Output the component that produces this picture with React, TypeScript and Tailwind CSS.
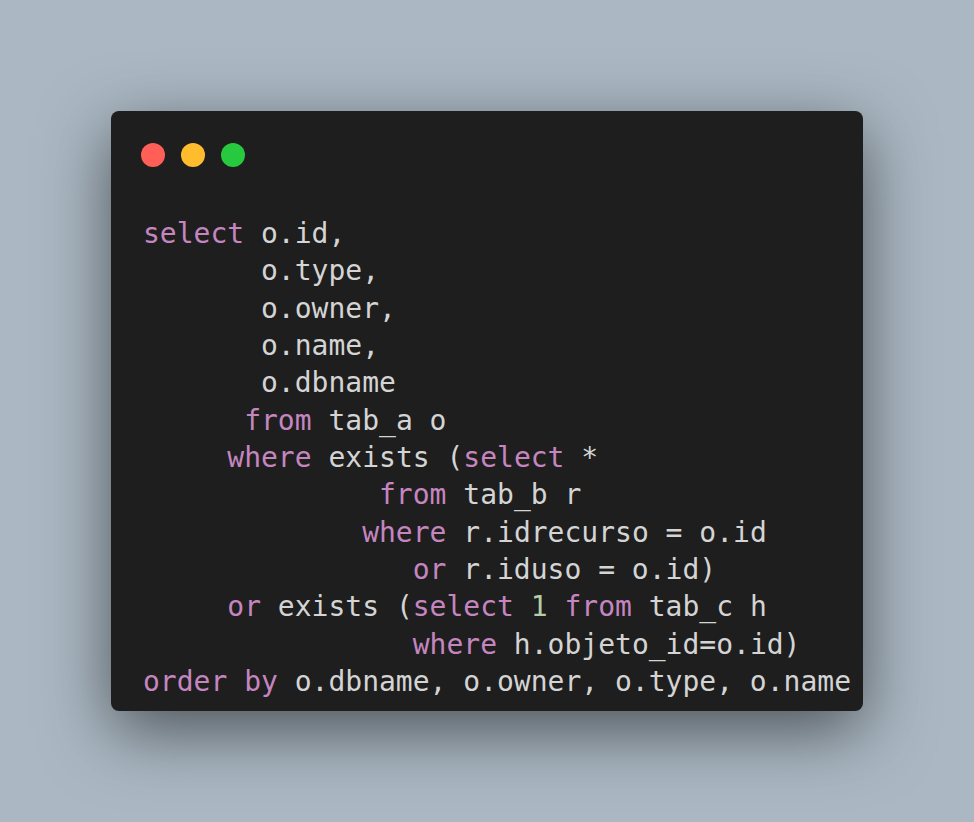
import React from "react";

type Tok = [string, "k" | "t" | "n"];

const LINES: Tok[][] = [
  [["select", "k"], [" o.id,", "t"]],
  [["       o.type,", "t"]],
  [["       o.owner,", "t"]],
  [["       o.name,", "t"]],
  [["       o.dbname", "t"]],
  [["      ", "t"], ["from", "k"], [" tab_a o", "t"]],
  [["     ", "t"], ["where", "k"], [" exists (", "t"], ["select", "k"], [" *", "t"]],
  [["              ", "t"], ["from", "k"], [" tab_b r", "t"]],
  [["             ", "t"], ["where", "k"], [" r.idrecurso = o.id", "t"]],
  [["                ", "t"], ["or", "k"], [" r.iduso = o.id)", "t"]],
  [["     ", "t"], ["or", "k"], [" exists (", "t"], ["select", "k"], [" ", "t"], ["1", "n"], [" ", "t"], ["from", "k"], [" tab_c h", "t"]],
  [["                ", "t"], ["where", "k"], [" h.objeto_id=o.id)", "t"]],
  [["order by", "k"], [" o.dbname, o.owner, o.type, o.name", "t"]],
];

const colorOf = (c: Tok[1]) => {
  if (c === "k") return "text-[#c586c0]";
  if (c === "n") return "text-[#b5cea8]";
  return "text-[#d4d4d4]";
};

export default function App() {
  return (
    <div className="h-[822px] w-full bg-[#abb8c3] flex items-center justify-center">
      <div className="w-[752px] h-[600px] rounded-lg bg-[#1e1e1e] shadow-[0_20px_68px_rgba(0,0,0,0.55)] flex flex-col">
        {/* window buttons */}
        <div className="flex gap-[16px] pl-[30px] pt-[32px]">
          <span className="w-[24px] h-[24px] rounded-full bg-[#ff5f56]" />
          <span className="w-[24px] h-[24px] rounded-full bg-[#ffbd2e]" />
          <span className="w-[24px] h-[24px] rounded-full bg-[#27c93f]" />
        </div>

        <pre className="mt-[48px] pl-[32px] text-[28px] leading-[37.33px] font-['DejaVu_Sans_Mono',monospace]">
          {LINES.map((line, i) => (
            <div key={i}>
              {line.map(([txt, c], j) => (
                <span key={j} className={colorOf(c)}>
                  {txt}
                </span>
              ))}
            </div>
          ))}
        </pre>
      </div>
    </div>
  );
}
